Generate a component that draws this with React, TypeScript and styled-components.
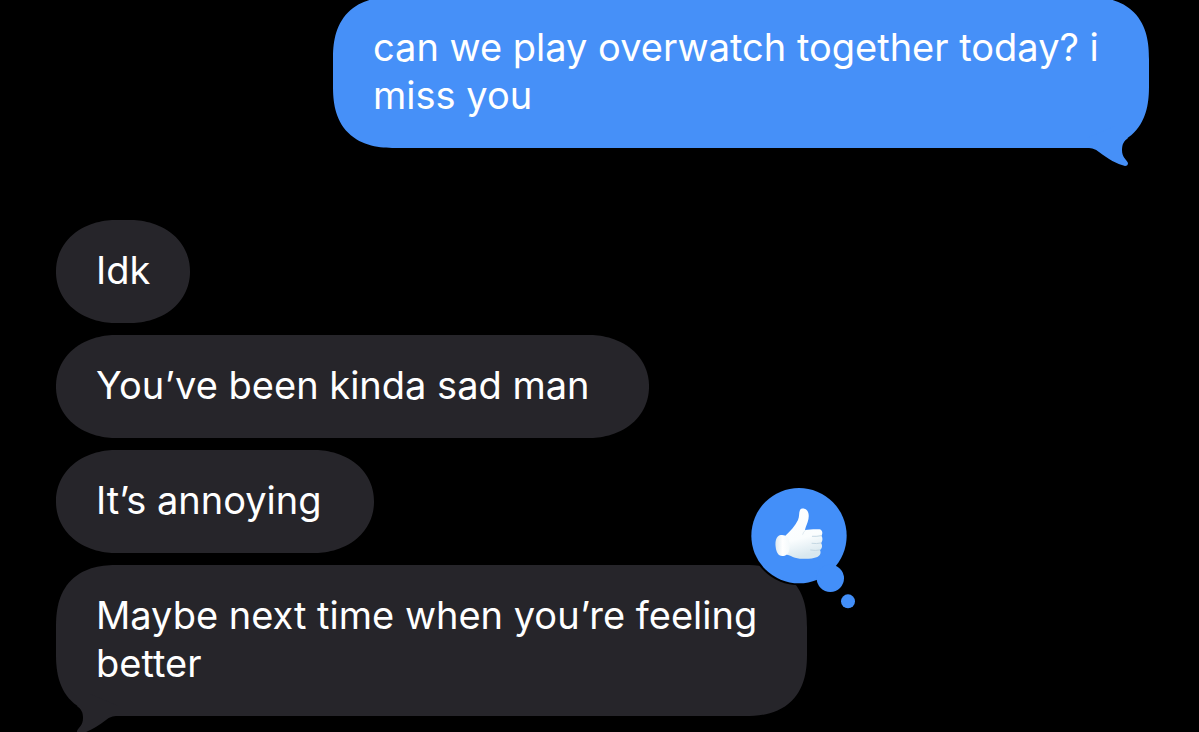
import React from "react";
import styled, { createGlobalStyle, css } from "styled-components";

const BLUE = "#4690f8";
const GRAY = "#26252a";

const GlobalStyle = createGlobalStyle`
  body {
    margin: 0;
    background: #000;
    font-family: Inter, "Liberation Sans", sans-serif;
  }
`;

const Screen = styled.main`
  box-sizing: border-box;
  height: 100vh;
  overflow: hidden;
  padding: 0 50px 0 56px;
`;

const Thread = styled.div`
  display: flex;
  flex-direction: column;
  gap: 72px;
  margin-top: -3px;
`;

const Group = styled.section<{ $sent?: boolean }>`
  display: flex;
  flex-direction: column;
  align-items: ${(p) => (p.$sent ? "flex-end" : "flex-start")};
  gap: 12px;
`;

const Bubble = styled.div<{ $sent?: boolean; $tall?: boolean; $room?: number; $max?: number }>`
  position: relative;
  box-sizing: border-box;
  max-width: ${(p) => (p.$max ? `min(100%, ${p.$max}px)` : "100%")};
  padding: 26px ${(p) => p.$room ?? 40}px 29px 40px;
  border-radius: ${(p) => (p.$tall ? "62px" : "60px / 51px")};
  corner-shape: ${(p) => (p.$tall ? "superellipse(1.3)" : "superellipse(1.05)")};
  background: ${(p) => (p.$sent ? BLUE : GRAY)};
  color: #fff;
`;

const Message = styled.p`
  margin: 0;
  font-size: 38px;
  line-height: 48px;
`;

const TailSvg = styled.svg<{ $sent?: boolean }>`
  position: absolute;
  bottom: -18px;
  ${(p) =>
    p.$sent
      ? css`
          right: 0;
        `
      : css`
          left: 0;
          transform: scaleX(-1);
        `}
`;

const ReactionSvg = styled.svg`
  position: absolute;
  top: -81px;
  right: -52px;
`;

function Tail({ sent }: { sent?: boolean }) {
  return (
    <TailSvg $sent={sent} width="64" height="58" viewBox="0 0 64 58" aria-hidden="true">
      <path
        d="M2 40C8 40 10 41 14 44C23 51 32 56 40 58Q43 58 43 55C41 51 37 49 37 42C37 36 39 33 43 30L30 18L2 30Z"
        fill={sent ? BLUE : GRAY}
      />
    </TailSvg>
  );
}

function ThumbsUpReaction() {
  return (
    <ReactionSvg width="112" height="126" viewBox="81 42 336 378" role="img" aria-label="Liked">
      <defs>
        <linearGradient id="hand" x1="0" y1="0" x2="0.2" y2="1">
          <stop offset="0" stopColor="#ffffff" />
          <stop offset="0.65" stopColor="#fafdfe" />
          <stop offset="1" stopColor="#d9e8ef" />
        </linearGradient>
        <linearGradient id="cuff" x1="0" y1="0" x2="1" y2="0">
          <stop offset="0" stopColor="#dfeaf0" />
          <stop offset="0.5" stopColor="#ffffff" />
          <stop offset="1" stopColor="#f4f9fb" />
        </linearGradient>
      </defs>
      <g fill="#000">
        <circle cx="237" cy="197" r="149" />
        <circle cx="331" cy="325" r="44" />
      </g>
      <g fill="#438ff9">
        <circle cx="237" cy="197" r="143" />
        <circle cx="331" cy="325" r="41" />
        <circle cx="384" cy="394" r="21" />
      </g>
      <path
        d="M196 197C210 184 226 168 234 150C239 139 236 129 240 120C245 113 256 115 262 122C268 131 267 145 263 156C260 165 256 173 255 180C269 178 286 177 299 178C308 180 309 192 304 197C309 203 308 214 303 219C308 225 307 236 300 240C304 248 301 257 292 261C274 268 244 268 225 263C216 260 209 255 201 254Z"
        fill="url(#hand)"
      />
      <path
        d="M182 195C168 198 165 214 167 231C169 247 174 257 187 258C197 258 205 252 207 243C211 229 209 209 202 201C197 196 190 194 182 195Z"
        fill="url(#cuff)"
      />
      <g fill="none" stroke="#c5d8e3" strokeWidth="3" strokeLinecap="round">
        <path d="M277 199Q291 200 304 197" />
        <path d="M276 220Q290 222 303 219" />
        <path d="M272 240Q287 243 299 240" />
        <path d="M256 181Q250 186 248 193" opacity="0.5" />
      </g>
    </ReactionSvg>
  );
}

export default function App() {
  return (
    <>
      <GlobalStyle />
      <Screen>
        <Thread>
          <Group $sent>
            <Bubble $sent $tall $max={816}>
              <Message>can we play overwatch together today? i miss you</Message>
              <Tail sent />
            </Bubble>
          </Group>
          <Group>
            <Bubble>
              <Message>Idk</Message>
            </Bubble>
            <Bubble $room={59}>
              <Message>You’ve been kinda sad man</Message>
            </Bubble>
            <Bubble $room={52}>
              <Message>It’s annoying</Message>
            </Bubble>
            <Bubble $tall $max={751}>
              <Message>Maybe next time when you’re feeling better</Message>
              <Tail />
              <ThumbsUpReaction />
            </Bubble>
          </Group>
        </Thread>
      </Screen>
    </>
  );
}
